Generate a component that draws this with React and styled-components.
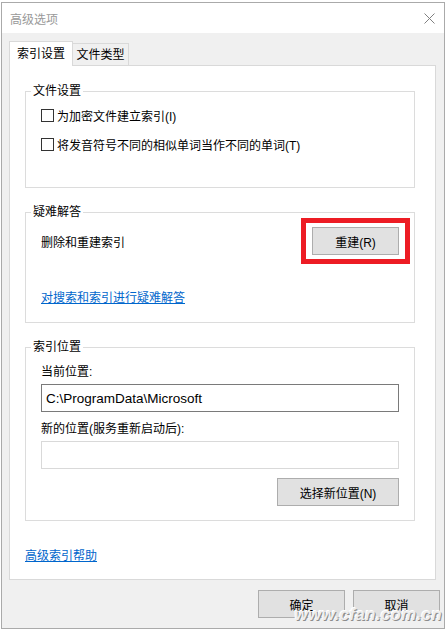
import React from 'react';
import styled, {createGlobalStyle} from 'styled-components';

const GlobalStyle = createGlobalStyle`
  html, body {
    margin: 0;
    padding: 0;
    background: #ffffff;
  }
  body {
    font-family: "Liberation Sans", "Noto Sans CJK SC", sans-serif;
    font-size: 12px;
    color: #000;
  }
`;

const Window = styled.div`
  position: relative;
  box-sizing: border-box;
  width: 444px;
  margin: 2px 0 0 1px;
  border: 1px solid #aaaaaa;
  background: #f0f0f0;
`;

const TitleBar = styled.div`
  height: 30px;
  display: flex;
  align-items: center;
  justify-content: space-between;
  padding: 0 9px 0 8px;
  background: #ffffff;
  color: #999999;
  font-size: 12px;
`;

const Body = styled.div`
  padding: 8px 6px 10px 7px;
  display: flex;
  flex-direction: column;
`;

const TabRow = styled.div`
  display: flex;
  align-items: flex-end;
  height: 24px;
`;

const Tab = styled.div`
  box-sizing: border-box;
  display: flex;
  align-items: center;
  justify-content: center;
  border: 1px solid #d9d9d9;
  border-bottom: none;
  line-height: 16px;
  ${p => p.$active ? `
    position: relative;
    z-index: 1;
    width: 64px;
    height: 25px;
    margin-bottom: -1px;
    background: #ffffff;
  ` : `
    width: 57px;
    height: 22px;
    margin-left: -1px;
    background: #f0f0f0;
  `}
`;

const Panel = styled.div`
  margin-right: 2px;
  border: 1px solid #d9d9d9;
  background: #ffffff;
  padding: 17px 20px 15px 15px;
  display: flex;
  flex-direction: column;
`;

const Group = styled.fieldset`
  margin: ${p => p.$first ? '0' : '16px'} 0 0 0;
  padding: 0;
  min-inline-size: 0;
  border: 1px solid #dcdcdc;
`;

const Legend = styled.legend`
  margin-left: 5px;
  padding: 0 2px;
  line-height: 16px;
  font-size: 12px;
`;

const GroupContent = styled.div`
  padding: ${p => p.$pad};
  display: flex;
  flex-direction: column;
`;

const CheckRow = styled.label`
  display: flex;
  align-items: center;
  gap: 3px;
  height: 20px;
  & + & {
    margin-top: 9px;
  }
`;

const Box = styled.span`
  box-sizing: border-box;
  width: 13px;
  height: 13px;
  border: 1px solid #333333;
  background: #ffffff;
  flex: none;
`;

const ActionRow = styled.div`
  display: flex;
  align-items: center;
  justify-content: space-between;
  height: 28px;
`;

const Button = styled.button`
  box-sizing: border-box;
  width: ${p => p.$w || 87}px;
  height: 28px;
  margin: 0;
  padding: 0;
  border: 1px solid #adadad;
  background: #e1e1e1;
  font-family: inherit;
  font-size: 12px;
  color: #000;
`;

const Marked = styled.span`
  position: relative;
  display: flex;
  &::after {
    content: '';
    position: absolute;
    left: -11px;
    right: -11px;
    top: -9px;
    bottom: -9px;
    border: 5px solid #ed1c24;
  }
`;

const HelpLink = styled.a`
  align-self: flex-start;
  margin-top: ${p => p.$top}px;
  line-height: 16px;
  color: #0066cc;
  text-decoration: underline;
  cursor: pointer;
`;

const Label = styled.div`
  line-height: 16px;
  margin-top: ${p => p.$top || 0}px;
`;

const Field = styled.div`
  box-sizing: border-box;
  height: 28px;
  margin-top: 4px;
  padding: 0 4px;
  display: flex;
  align-items: center;
  border: 1px solid ${p => p.$dim ? '#d9d9d9' : '#7a7a7a'};
  background: #ffffff;
  font-size: 13.5px;
`;

const RightAlign = styled.div`
  display: flex;
  justify-content: flex-end;
  margin-top: 9px;
`;

const ButtonBar = styled.div`
  display: flex;
  justify-content: flex-end;
  gap: 8px;
  margin: 10px -2px 0 0;
`;

const Stamp = styled.span`
  position: absolute;
  right: 2px;
  bottom: 3px;
  font-family: "Liberation Sans", sans-serif;
  font-size: 17px;
  font-weight: bold;
  font-style: italic;
  letter-spacing: 0.3px;
  color: #eeeeee;
  text-shadow: 1px 1px 0 #8c8c8c, -1px -1px 0 #ffffff;
  pointer-events: none;
`;

const CloseIcon = () => (
  <svg width="11" height="11" viewBox="0 0 11 11">
    <path d="M0.5 0.5L10.5 10.5M10.5 0.5L0.5 10.5" stroke="#808080" strokeWidth="1" fill="none" />
  </svg>
);

const options = [
  '为加密文件建立索引(I)',
  '将发音符号不同的相似单词当作不同的单词(T)',
];

export default function App() {
  return (
    <>
      <GlobalStyle />
      <Window>
        <TitleBar>
          <span>高级选项</span>
          <CloseIcon />
        </TitleBar>
        <Body>
          <TabRow>
            <Tab $active>索引设置</Tab>
            <Tab>文件类型</Tab>
          </TabRow>
          <Panel>
            <Group $first>
              <Legend>文件设置</Legend>
              <GroupContent $pad="6px 15px 33px">
                {options.map(text => (
                  <CheckRow key={text}>
                    <Box />
                    <span>{text}</span>
                  </CheckRow>
                ))}
              </GroupContent>
            </Group>

            <Group>
              <Legend>疑难解答</Legend>
              <GroupContent $pad="7px 15px 16px">
                <ActionRow>
                  <span>删除和重建索引</span>
                  <Marked>
                    <Button>重建(R)</Button>
                  </Marked>
                </ActionRow>
                <HelpLink $top={35}>对搜索和索引进行疑难解答</HelpLink>
              </GroupContent>
            </Group>

            <Group>
              <Legend>索引位置</Legend>
              <GroupContent $pad="9px 15px 14px">
                <Label>当前位置:</Label>
                <Field>C:\ProgramData\Microsoft</Field>
                <Label $top={9}>新的位置(服务重新启动后):</Label>
                <Field $dim />
                <RightAlign>
                  <Button $w={122}>选择新位置(N)</Button>
                </RightAlign>
              </GroupContent>
            </Group>

            <HelpLink $top={27}>高级索引帮助</HelpLink>
          </Panel>
          <ButtonBar>
            <Button>确定</Button>
            <Button>取消</Button>
          </ButtonBar>
        </Body>
        <Stamp>www.cfan.com.cn</Stamp>
      </Window>
    </>
  );
}
